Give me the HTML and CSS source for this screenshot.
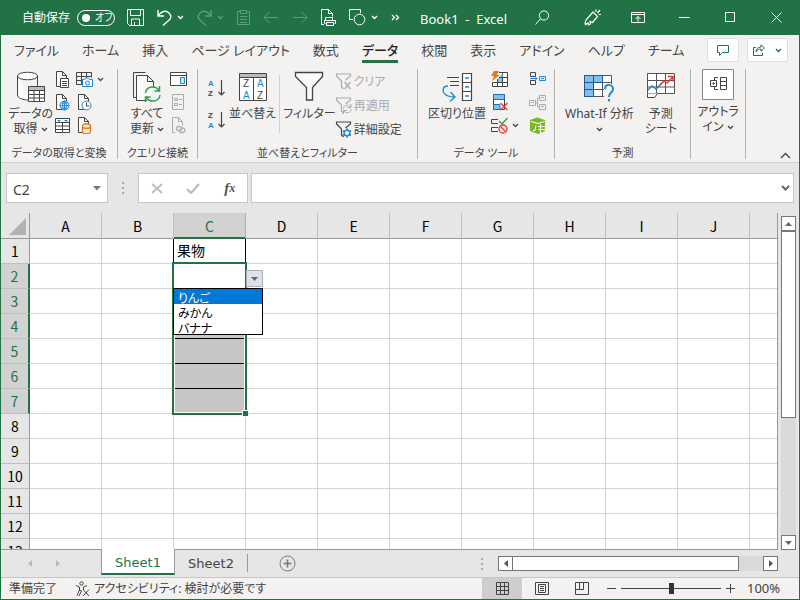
FILE: index.html
```html
<!DOCTYPE html>
<html lang="ja">
<head>
    <meta charset="UTF-8">
    <meta name="viewport" content="width=device-width, initial-scale=1.0">
    <title>Book1 - Excel</title>
    <link rel="stylesheet" href="styles.css">
</head>
<body>

<svg class="defs" aria-hidden="true">
    <symbol id="chevron" viewBox="0 0 7 5"><path d="M1 1l2.5 2.5L6 1" fill="none" stroke="currentColor" stroke-width="1.3"/></symbol>
    <symbol id="page" viewBox="0 0 17 17"><path d="M8.5 15.5h-6v-15h6l4 4v3M8.5.5v4h4" fill="#fafafa" stroke="#444"/></symbol>
    <symbol id="small-funnel" viewBox="0 0 17 17"><path d="M6.500 8L1.500 3V1h14v2l-5 4M6.500 8v6l2 2" fill="none" stroke="currentColor" stroke-width="1.2"/></symbol>
</svg>

<div class="window">
    <header class="titlebar">
        <label class="autosave">自動保存
            <input type="checkbox" role="switch">
            <span class="switch">オフ</span>
        </label>
        <div class="quick">
            <button class="tool" aria-label="保存"><svg width="17" height="17" viewBox="0 0 17 17"><path d="M.5.500h16v16h-14l-2-2zM3.500.5v6h10v-6M4.500 16v-6h8v6M7.500 16v-3" /></svg></button>
            <button class="tool" aria-label="元に戻す"><svg width="15" height="17" viewBox="0 0 15 17"><path d="M1 1v6h6M1 7c3-5 8-6 11-3s2 6-1 8l-5 4.500" stroke-width="1.400"/></svg></button>
            <button class="tool more" aria-label="元に戻す一覧"><svg class="chevron"><use href="#chevron"/></svg></button>
            <button class="tool off redo" aria-label="やり直し"><svg width="15" height="17" viewBox="0 0 15 17"><path d="M14 1v6H8M14 7C11 2 6 1 3 4s-2 6 1 8l5 4.500" stroke-width="1.400"/></svg></button>
            <button class="tool more off" aria-label="やり直し一覧"><svg class="chevron"><use href="#chevron"/></svg></button>
            <button class="tool off" aria-label="貼り付け"><svg width="13" height="17" viewBox="0 0 13 17"><path d="M3.500 2.500h-3v13h12v-13h-3M3.500 1.500h6v3h-6zM3 7.500h7M3 10.500h7M3 13.500h7"/></svg></button>
            <button class="tool off" aria-label="戻る"><svg width="16" height="13" viewBox="0 0 16 13"><path d="M15 6.500H1M6.500 1L1 6.500 6.500 12"/></svg></button>
            <button class="tool off" aria-label="進む"><svg width="16" height="13" viewBox="0 0 16 13"><path d="M1 6.500h14M9.500 1L15 6.500 9.500 12"/></svg></button>
            <button class="tool" aria-label="印刷プレビュー"><svg width="15" height="17" viewBox="0 0 15 17"><path d="M3 15.500H.5V.5h7l4 4v3M7.500.5v4h4M4.500 11.500v-3h7v3M4.500 14.500h-1v-3h11v3h-1M5.500 13.500h7v3h-7z"/></svg></button>
            <button class="tool" aria-label="図形"><svg width="17" height="17" viewBox="0 0 17 17"><path d="M4 10.500H.5V.5h11V4"/><circle cx="10.500" cy="10.500" r="5.300"/></svg></button>
            <button class="tool more" aria-label="図形一覧"><svg class="chevron"><use href="#chevron"/></svg></button>
            <button class="tool" aria-label="その他"><svg width="9" height="7" viewBox="0 0 9 7"><path d="M1 1l2.500 2.500L1 6M5 1l2.500 2.500L5 6" stroke-width="1.300"/></svg></button>
        </div>
        <h1 class="title">Book1&nbsp; -&nbsp; Excel</h1>
        <div class="controls">
            <button aria-label="検索"><svg width="15" height="15" viewBox="0 0 15 15"><circle cx="9" cy="5.500" r="4.600"/><path d="M5.500 8.800L.5 14.500"/></svg></button>
            <button aria-label="描画"><svg width="17" height="17" viewBox="0 0 17 17"><path d="M9 3l4.500 4.500-5 6-2.500-1 .5 2.500-2 1-.5-2-2.500 1.500L1 14l1-3zM12 3V.5M13.500 4L16 1M14.500 5.500h2.500" stroke-width="1.200"/></svg></button>
            <button aria-label="リボンの表示"><svg width="14" height="11" viewBox="0 0 14 11"><path d="M.5.500h13v10H.5zM.5 2.500h13M7 9.500v-5M4.500 7L7 4.500 9.500 7"/></svg></button>
            <button aria-label="最小化"><svg width="11" height="11" viewBox="0 0 11 11"><path d="M0 5.500h10.500"/></svg></button>
            <button aria-label="最大化"><svg width="11" height="11" viewBox="0 0 11 11"><path d="M.5.500h9v9h-9z"/></svg></button>
            <button aria-label="閉じる"><svg width="11" height="11" viewBox="0 0 11 11"><path d="M.5.500l10 10M10.500.5l-10 10"/></svg></button>
        </div>
    </header>

    <nav class="tabs">
        <a href="#">ファイル</a>
        <a href="#">ホーム</a>
        <a href="#">挿入</a>
        <a href="#">ページ レイアウト</a>
        <a href="#">数式</a>
        <a href="#" class="active">データ</a>
        <a href="#">校閲</a>
        <a href="#">表示</a>
        <a href="#">アドイン</a>
        <a href="#">ヘルプ</a>
        <a href="#">チーム</a>
        <div class="share">
            <button aria-label="コメント"><svg width="12" height="11" viewBox="0 0 12 11"><path d="M.5.500h11v7h-6l-3 3v-3h-2z"/></svg></button>
            <button aria-label="共有"><svg width="12" height="12" viewBox="0 0 12 12"><path d="M3 3.500H.5v8h9V9M3 8c0-3 2-5 5-5V.800L11.500 4 8 7.200V5C6 5 4 6 3 8z"/></svg><svg class="chevron"><use href="#chevron"/></svg></button>
        </div>
    </nav>

    <section class="ribbon">
        <div class="group get-data">
            <div class="tools">
                <button class="big"><svg width="30" height="32" viewBox="0 0 30 32"><path d="M1.500 5v19c0 3 5 5 11 5h2M1.500 5c0-5 20-5 20 0s-20 5-20 0M21.500 5v10" fill="#fafafa" stroke="#444"/><path d="M12.500 15.500h16v15h-16z" fill="#fff" stroke="#444"/><path d="M13 16h15v3H13z" fill="#bbb"/><path d="M12.500 19.500h16M12.500 23.500h16M12.500 27h16M18 19.500v11M23.500 19.500v11" stroke="#444"/></svg>データの<br>取得 <svg class="chevron"><use href="#chevron"/></svg></button>
                <div class="stack">
                    <button aria-label="テキストから"><svg width="17" height="17"><use href="#page"/><path d="M6.500 7.500h8v9h-8z" fill="#fff" stroke="#444"/><path d="M8 10.500h5M8 12.500h5M8 14.500h5" stroke="#444"/></svg></button>
                    <button aria-label="Web から"><svg width="17" height="17"><use href="#page"/><circle cx="10.500" cy="11.500" r="4.500" fill="#fff" stroke="#1e88d2"/><path d="M6 11.500h9M10.500 7v9M7 9h7M7 14h7" stroke="#1e88d2"/><ellipse cx="10.500" cy="11.500" rx="2" ry="4.500" fill="none" stroke="#1e88d2"/></svg></button>
                    <button aria-label="テーブルから"><svg width="17" height="17"><path d="M1.500 1.500h14v14h-14zM1.500 5.500h14M1.500 9h14M1.500 12.500h14M8.500 5.500v10" fill="#fff" stroke="#444"/><path d="M3 3h4L5 5zM10 3h4l-2 2z" fill="#1e88d2"/></svg></button>
                </div>
                <div class="stack">
                    <span class="pair"><button aria-label="画像から"><svg width="17" height="17"><path d="M.5 1.500h15v5M.5 1.500v12h5M.5 5.500h15M.5 9.500h6M5.500 1.500v12M10.500 1.500v5" fill="none" stroke="#444"/><path d="M6.500 8.500h2l1-1.500h3l1 1.500h3v7h-10z" fill="#fff" stroke="#1e88d2"/><circle cx="11.500" cy="12" r="2" fill="none" stroke="#1e88d2"/></svg></button><button class="arrow" aria-label="画像のオプション"><svg class="chevron"><use href="#chevron"/></svg></button></span>
                    <button aria-label="最近使ったソース"><svg width="17" height="17"><use href="#page"/><circle cx="10.500" cy="11.500" r="4.500" fill="#fff" stroke="#1e88d2"/><path d="M10.500 8.500v3.500h3" fill="none" stroke="#444"/></svg></button>
                    <button aria-label="既存の接続"><svg width="17" height="17"><use href="#page"/><path d="M6.500 9v5.500c0 3 8 3 8 0V9c0-3-8-3-8 0s8 3 8 0" fill="#fce9d4" stroke="#e07b16" stroke-width="1.300"/></svg></button>
                </div>
            </div>
            <h2>データの取得と変換</h2>
        </div>

        <div class="group queries">
            <div class="tools">
                <button class="big"><svg width="30" height="32" viewBox="0 0 30 32"><path d="M4 26.500H1.500v-25h12" fill="none" stroke="#444"/><path d="M15 29.500H4.500v-25h11l6 6v6M15.500 4.500v6h6" fill="#fafafa" stroke="#444"/><path d="M13.500 22c1-7 10-8 13.500-2.500M27.500 15v5h-5M28 24c-1 7-10 8-13.500 2.500M13.500 31v-5h5" fill="none" stroke="#2ea04e" stroke-width="1.500"/></svg>すべて<br>更新 <svg class="chevron"><use href="#chevron"/></svg></button>
                <div class="stack">
                    <button aria-label="クエリと接続"><svg width="17" height="17"><path d="M.5 1.500h16v13H.5zM.5 4.500h16" fill="#fff" stroke="#444"/><path d="M10.500 6.500h4v6h-4z" fill="#cfe5f6" stroke="#1e88d2"/></svg></button>
                    <button aria-label="プロパティ" disabled><svg width="17" height="17"><path d="M2.500.5h11v15h-11zM4.500 4.500h3v2h-3zM4.500 9.500h3v2h-3zM9 5.500h3M9 10.500h3" fill="none" stroke="#aaa"/></svg></button>
                    <button aria-label="リンクの編集" disabled><svg width="17" height="17"><path d="M5 15.500H2.500V.5h6l4 4v4M8.500.5v4h4" fill="none" stroke="#aaa"/><path d="M9 13.500H7.500c-2-1-1-4 1-4h2c2 1 1 4 0 4M11 11h2c3 1 2 4 0 4.500h-2.500c-2-1-1-3 0-3.500" fill="none" stroke="#aaa" stroke-width="1.300"/></svg></button>
                </div>
            </div>
            <h2>クエリと接続</h2>
        </div>

        <div class="group sorting">
            <div class="tools">
                <div class="orders">
                    <button aria-label="昇順"><svg width="18" height="20" viewBox="0 0 18 20"><text x="0" y="8" class="letter blue">A</text><text x="0" y="18" class="letter">Z</text><path d="M13.500 2v15M10.500 14l3 3 3-3" fill="none" stroke="#444" stroke-width="1.200"/></svg></button>
                    <button aria-label="降順"><svg width="18" height="20" viewBox="0 0 18 20"><text x="0" y="8" class="letter">Z</text><text x="0" y="18" class="letter blue">A</text><path d="M13.500 2v15M10.500 14l3 3 3-3" fill="none" stroke="#444" stroke-width="1.200"/></svg></button>
                </div>
                <button class="big"><svg width="30" height="32" viewBox="0 0 30 32"><path d="M1.500 2.500h27v27h-27z" fill="#fff" stroke="#444"/><path d="M2 3h26v3H2z" fill="#bbb"/><path d="M1.500 6.500h27M15.500 6.500v23" stroke="#444"/><text x="5" y="16" class="glyph">Z</text><text x="5" y="28" class="glyph blue">A</text><text x="19" y="16" class="glyph blue">A</text><text x="19" y="28" class="glyph">Z</text></svg>並べ替え</button>
                <div class="rule"></div>
                <button class="big"><svg width="30" height="32" viewBox="0 0 30 32"><path d="M1.500 1.500h27v4l-10 11v12.500h-6V16.500l-11-11z" fill="#fafafa" stroke="#444" stroke-width="1.300"/></svg>フィルター</button>
                <div class="stack wide">
                    <button disabled><svg width="17" height="17"><use href="#small-funnel"/><path d="M9.500 9l6 7M15.500 9l-6 7" stroke="#aaa" stroke-width="1.200"/></svg>クリア</button>
                    <button disabled><svg width="17" height="17"><use href="#small-funnel"/><path d="M8.500 12c0-4 5-5 7-2M16 7v3.500h-3.500M16 12c0 4-5 5-7 2M8.500 17v-3.500H12" fill="none" stroke="#aaa"/></svg>再適用</button>
                    <button><svg width="17" height="17"><use href="#small-funnel"/><circle cx="12" cy="12" r="2.800" fill="#fff" stroke="#1e88d2" stroke-width="1.500"/><path d="M12 7.500v2M12 14.500v2M8 9.800l1.800 1M14.200 13.200l1.800 1M8 14.200l1.800-1M14.200 10.800l1.800-1" stroke="#1e88d2" stroke-width="1.800"/></svg>詳細設定</button>
                </div>
            </div>
            <h2>並べ替えとフィルター</h2>
        </div>

        <div class="group data-tools">
            <div class="tools">
                <button class="big"><svg width="32" height="32" viewBox="0 0 32 32"><path d="M21.500 2.500h9v27h-9zM21.500 11.500h9M21.500 20.500h9" fill="#fff" stroke="#444" stroke-width="1.200"/><path d="M6 6.500h12M9 10.500h9M9 14.500h9" stroke="#444" stroke-width="1.200"/><path d="M24 7h4M24 16h4M24 25h4M7 15C2 15 1 19 3 22c2 3 6 4 11 4M9.500 21l4.500 5-5 4.500" fill="none" stroke="#1e88d2" stroke-width="1.300"/></svg>区切り位置</button>
                <div class="stack">
                    <button aria-label="フラッシュ フィル"><svg width="17" height="17"><path d="M8 1.500h8.500v14h-15v-4M1.500 11.500h15M6.500 8v7M11.500 1.500v14M8 6.500h8" fill="#fff" stroke="#444"/><path d="M7 7h4v4H7zM11.500 2v4L8 6z" fill="#8cc4ee"/><path d="M3 0h5L6 4h3L1 10l2-5H0z" fill="#e07b16"/></svg></button>
                    <button aria-label="重複の削除"><svg width="17" height="17"><path d="M2.500.5h11v15h-11z" fill="#fff" stroke="#444"/><path d="M2.500.5h11v5h-11zM2.500 10.500H9v5H2.500z" fill="#85bdeb" stroke="#1e70b8"/><path d="M9.500 9l7 7M16.500 9l-7 7" stroke="#e33" stroke-width="1.300"/></svg></button>
                    <span class="pair"><button aria-label="データの入力規則"><svg width="17" height="17"><path d="M7 2.500H.5v4H7M7 10.500H.5v4H7" fill="none" stroke="#444"/><path d="M8 4l3 3 5.500-6" fill="none" stroke="#2ea04e" stroke-width="1.300"/><circle cx="12" cy="12" r="4" fill="none" stroke="#e33" stroke-width="1.300"/><path d="M9.500 9.500l5 5" stroke="#e33" stroke-width="1.300"/></svg></button><button class="arrow" aria-label="入力規則のオプション"><svg class="chevron"><use href="#chevron"/></svg></button></span>
                </div>
                <div class="stack">
                    <button aria-label="統合"><svg width="17" height="17"><path d="M1.500 1.500h5v4h-5zM1.500 9.500h5v4h-5z" fill="none" stroke="#444"/><path d="M1 7.500h7M6 5.500l2 2-2 2M10.500 5.500h6v4h-6zM12 7.500h3" fill="none" stroke="#1e88d2"/></svg></button>
                    <button aria-label="リレーションシップ" disabled><svg width="17" height="17"><path d="M.5 6.500h6v5h-6zM2 8.500h3M10.500 1.500h6v5h-6zM12 3.500h3M10.500 10.500h6v5h-6zM12 12.500h3M6.500 9H9M8.500 4v9M8.500 4h2M8.500 13h2" fill="none" stroke="#aaa"/></svg></button>
                    <button aria-label="データ モデル"><svg width="17" height="17"><path d="M1 3l7-2.500L16 3v11l-7 3-8-3z" fill="#7ab829"/><path d="M2 4.500l7 2 6.500-2M11.500 7v9M9 9.500h7M9 12.500h7M4 13.500h2l1-5" fill="none" stroke="#fff"/></svg></button>
                </div>
            </div>
            <h2>データ ツール</h2>
        </div>

        <div class="group forecast">
            <div class="tools">
                <button class="big"><svg width="32" height="32" viewBox="0 0 32 32"><path d="M1.500 4.500h27v21h-27zM1.500 11.500h27M1.500 18.500h27M10.500 4.500v21M19.500 4.500v21" fill="#fff" stroke="#555"/><path d="M1.500 4.500h9v21h-9zM1.500 11.500h9M1.500 18.500h9M10.500 4.500h9v7h-9z" fill="#85bdeb" stroke="#1e5a91"/><path d="M21 13h10v17H21z" fill="#f3f2f1"/><path d="M22 18c0-6 8-5 8 0 0 4-4 3-4 8M26 28v2.500" fill="none" stroke="#1e88d2" stroke-width="2"/></svg>What-If 分析<br><svg class="chevron"><use href="#chevron"/></svg></button>
                <button class="big"><svg width="30" height="32" viewBox="0 0 30 32"><path d="M11 22.500H1.500v-20h27v20zM1.500 9.500h27M1.500 16h27M10.500 2.500v20M19.500 2.500v20" fill="#fff" stroke="#555"/><path d="M1.500 22.500v4h7l3-4" fill="#fff" stroke="#444"/><path d="M2 19l4-4 4 3 6-6" fill="none" stroke="#1e88d2" stroke-width="1.500"/><path d="M14 14l4-4 3 2 6-6M22 5.500h5v5" fill="none" stroke="#e33" stroke-width="1.500"/></svg>予測<br>シート</button>
            </div>
            <h2>予測</h2>
        </div>

        <div class="group outline">
            <div class="tools">
                <button class="big"><svg width="32" height="32" viewBox="0 0 32 32"><path d="M.5.500h31v30H.5z" fill="#fff" stroke="#888"/><path d="M18.500 8.500h6v12h-6zM18.500 12.500h6M18.500 16.500h6M8.500 11.500h6v6h-6zM12.500 11V8.500H16M12.500 18v2.500H16" fill="none" stroke="#444"/><path d="M10 14.500h3M11.500 13v3" stroke="#1e88d2"/></svg>アウトラ<br>イン <svg class="chevron"><use href="#chevron"/></svg></button>
            </div>
        </div>
        <button class="collapse" aria-label="リボンを折りたたむ"><svg width="11" height="7" viewBox="0 0 11 7"><path d="M1 6l4.500-4.500L10 6" fill="none" stroke="#444" stroke-width="1.300"/></svg></button>
    </section>

    <section class="formula-bar">
        <div class="name-box">
            <input type="text" value="C2" aria-label="名前ボックス">
            <svg width="8" height="5"><path d="M0 0h8L4 4.500z" fill="#777"/></svg>
        </div>
        <span class="dots"></span>
        <div class="entry">
            <button aria-label="キャンセル"><svg width="12" height="11"><path d="M1 1l10 9M11 1L1 10" stroke="#bbb" stroke-width="1.800"/></svg></button>
            <button aria-label="入力"><svg width="14" height="11"><path d="M1 6l4 4 8-9" fill="none" stroke="#bbb" stroke-width="2.200"/></svg></button>
            <button class="fx" aria-label="関数の挿入">f<small>x</small></button>
        </div>
        <div class="formula">
            <input type="text" aria-label="数式">
            <svg width="9" height="6"><path d="M1 1l3.500 3.500L8 1" fill="none" stroke="#666" stroke-width="2"/></svg>
        </div>
    </section>

    <main class="workarea">
        <div class="sheet">
            <table>
                <thead>
                    <tr><th class="corner" aria-label="すべて選択"><svg width="17" height="17"><path d="M17 0v17H0z" fill="#b2b2b2"/></svg></th><th>A</th><th>B</th><th class="selected">C</th><th>D</th><th>E</th><th>F</th><th>G</th><th>H</th><th>I</th><th>J</th><th></th></tr>
                </thead>
                <tbody>
                    <tr><th>1</th><td></td><td></td><td class="boxed">果物</td><td></td><td></td><td></td><td></td><td></td><td></td><td></td><td></td></tr>
                    <tr><th class="selected">2</th><td></td><td></td>
                        <td class="current">
                            <div class="range"><i></i><i></i><i></i><i></i><i></i><i></i><b class="handle"></b></div>
                            <button class="drop" aria-label="リストを開く"><svg width="7" height="4"><path d="M0 0h7L3.500 4z" fill="#666"/></svg></button>
                            <select class="list" size="3" aria-label="果物">
                                <option selected>りんご</option>
                                <option>みかん</option>
                                <option>バナナ</option>
                            </select>
                        </td>
                        <td></td><td></td><td></td><td></td><td></td><td></td><td></td><td></td></tr>
                    <tr><th class="selected">3</th><td></td><td></td><td></td><td></td><td></td><td></td><td></td><td></td><td></td><td></td><td></td></tr>
                    <tr><th class="selected">4</th><td></td><td></td><td></td><td></td><td></td><td></td><td></td><td></td><td></td><td></td><td></td></tr>
                    <tr><th class="selected">5</th><td></td><td></td><td></td><td></td><td></td><td></td><td></td><td></td><td></td><td></td><td></td></tr>
                    <tr><th class="selected">6</th><td></td><td></td><td></td><td></td><td></td><td></td><td></td><td></td><td></td><td></td><td></td></tr>
                    <tr><th class="selected">7</th><td></td><td></td><td></td><td></td><td></td><td></td><td></td><td></td><td></td><td></td><td></td></tr>
                    <tr><th>8</th><td></td><td></td><td></td><td></td><td></td><td></td><td></td><td></td><td></td><td></td><td></td></tr>
                    <tr><th>9</th><td></td><td></td><td></td><td></td><td></td><td></td><td></td><td></td><td></td><td></td><td></td></tr>
                    <tr><th>10</th><td></td><td></td><td></td><td></td><td></td><td></td><td></td><td></td><td></td><td></td><td></td></tr>
                    <tr><th>11</th><td></td><td></td><td></td><td></td><td></td><td></td><td></td><td></td><td></td><td></td><td></td></tr>
                    <tr><th>12</th><td></td><td></td><td></td><td></td><td></td><td></td><td></td><td></td><td></td><td></td><td></td></tr>
                    <tr><th>13</th><td></td><td></td><td></td><td></td><td></td><td></td><td></td><td></td><td></td><td></td><td></td></tr>
                </tbody>
            </table>
        </div>
        <div class="scroll vertical">
            <button aria-label="上へ"><svg width="7" height="4"><path d="M0 4h7L3.500 0z" fill="#666"/></svg></button>
            <div class="thumb"></div>
            <button class="end" aria-label="下へ"><svg width="7" height="4"><path d="M0 0h7L3.500 4z" fill="#666"/></svg></button>
        </div>
    </main>

    <footer>
        <div class="sheetbar">
            <div class="nav">
                <button aria-label="前のシート"><svg width="4" height="7"><path d="M4 0v7L0 3.500z" fill="#bbb"/></svg></button>
                <button aria-label="次のシート"><svg width="4" height="7"><path d="M0 0v7l4-3.500z" fill="#bbb"/></svg></button>
            </div>
            <button class="sheet-tab active">Sheet1</button>
            <button class="sheet-tab">Sheet2</button>
            <button class="add" aria-label="新しいシート"><svg width="17" height="17"><circle cx="8.500" cy="8.500" r="7.500" fill="none" stroke="#777"/><path d="M8.500 4.500v8M4.500 8.500h8" stroke="#777" stroke-width="1.600"/></svg></button>
            <span class="dots"></span>
            <div class="scroll horizontal">
                <button aria-label="左へ"><svg width="4" height="7"><path d="M4 0v7L0 3.500z" fill="#555"/></svg></button>
                <div class="thumb"></div>
                <button class="end" aria-label="右へ"><svg width="4" height="7"><path d="M0 0v7l4-3.500z" fill="#555"/></svg></button>
            </div>
        </div>
        <div class="status">
            <span>準備完了</span>
            <button class="access"><svg width="16" height="16" viewBox="0 0 16 16"><circle cx="6.500" cy="2.500" r="1.700"/><path d="M1 4.500l3.500 1.500v3L2 14.500M12 4.500L8.500 6v3M4.500 9l2 1L4 15M8 8.500l6 6.500M14 8.500L8 15"/></svg>アクセシビリティ: 検討が必要です</button>
            <div class="views">
                <button class="active" aria-label="標準"><svg width="13" height="13"><path d="M.5.500h12v12H.5zM.5 4.500h12M.5 8.500h12M4.500.5v12M8.500.5v12"/></svg></button>
                <button aria-label="ページ レイアウト"><svg width="14" height="13"><path d="M.5.500h13v12H.5zM3.500 2.500h7v8h-7zM5 4.500h4M5 6.500h4M5 8.500h4"/></svg></button>
                <button aria-label="改ページ プレビュー"><svg width="14" height="13"><path d="M.5.500h13v12H.5zM.5 7.500h8v-7M4.500.5v7"/></svg></button>
            </div>
            <button class="step" aria-label="縮小"><svg width="9" height="9"><path d="M0 4.500h9"/></svg></button>
            <input class="zoom" type="range" min="0" max="100" value="50" aria-label="ズーム">
            <button class="step" aria-label="拡大"><svg width="9" height="9"><path d="M0 4.500h9M4.500 0v9"/></svg></button>
            <output>100%</output>
        </div>
    </footer>
</div>

</body>
</html>
```
FILE: styles.css
```css
* {
    box-sizing: border-box;
}

body {
    margin: 0;
    font-family: "Noto Sans", "Noto Sans CJK JP", sans-serif;
    font-feature-settings: "palt";
    font-size: 12px;
    line-height: 15px;
    color: #444;
}

button,
input,
select {
    font: inherit;
    font-feature-settings: inherit;
    color: inherit;
}

button {
    display: flex;
    align-items: center;
    justify-content: center;
    padding: 0;
    border: 0;
    background: none;
}

svg {
    flex: none;
}

h1,
h2 {
    margin: 0;
    font-size: inherit;
    font-weight: normal;
}

.defs {
    display: none;
}

.chevron {
    width: 7px;
    height: 5px;
}

.window {
    display: flex;
    flex-direction: column;
    height: 100vh;
    border: 1px solid #217346;
    border-top: 0;
    background: #e6e6e6;
    overflow: hidden;
}

/* Title bar */
.titlebar {
    display: flex;
    align-items: center;
    flex: none;
    height: 35px;
    padding-left: 21px;
    background: #217346;
    color: #fff;
}

.titlebar svg {
    fill: none;
    stroke: currentColor;
}

.titlebar .chevron {
    stroke: none;
}

.autosave {
    display: flex;
    align-items: center;
    gap: 7px;
}

.autosave input {
    position: absolute;
    opacity: 0;
}

.switch {
    display: flex;
    align-items: center;
    gap: 5px;
    width: 38px;
    height: 16px;
    padding-left: 4px;
    border: 1px solid #fff;
    border-radius: 8px;
    font-size: 10px;
}

.switch::before {
    content: "";
    width: 8px;
    height: 8px;
    border-radius: 50%;
    background: #fff;
}

.quick {
    display: flex;
    align-items: center;
    gap: 13px;
    margin-left: 12px;
}

.quick .off {
    color: #5f9c7b;
}

.quick .more {
    margin-left: -8px;
}

.title {
    margin-left: 20px;
    padding-top: 3px;
    font-size: 13px;
    white-space: nowrap;
}

.controls {
    display: flex;
    margin-left: auto;
}

.controls button {
    width: 46px;
    height: 35px;
}

.controls button:first-child {
    width: 54px;
}

/* Ribbon tabs */
.tabs {
    display: flex;
    flex: none;
    gap: 23px;
    height: 31px;
    padding: 0 12px 0 13px;
    background: #f3f2f1;
}

.tabs a {
    padding-top: 8px;
    font-size: 13px;
    color: inherit;
    text-decoration: none;
    white-space: nowrap;
}

.tabs .active {
    height: 28px;
    border-bottom: 3px solid #217346;
    font-weight: 500;
    color: #222;
}

.share {
    display: flex;
    gap: 8px;
    margin-left: auto;
    padding-top: 3px;
}

.share button {
    gap: 10px;
    width: 32px;
    height: 24px;
    border: 1px solid #e1dfdd;
    border-radius: 2px;
    background: #fff;
    color: #217346;
}

.share button + button {
    width: 41px;
}

.share svg {
    fill: none;
    stroke: currentColor;
}

.share .chevron {
    stroke: none;
}

/* Ribbon */
.ribbon {
    display: flex;
    flex: none;
    height: 97px;
    padding-top: 3px;
    border-bottom: 1px solid #d2d0ce;
    background: #f3f2f1;
    white-space: nowrap;
}

.group {
    display: flex;
    flex-direction: column;
    justify-content: space-between;
    flex: none;
    height: 90px;
    padding: 0 7px;
    border-right: 1px solid #b4b2b0;
}

.group h2 {
    margin: 0 -7px;
    font-size: 11px;
    line-height: 12px;
    text-align: center;
}

.get-data {
    width: 117px;
}

.queries {
    width: 80px;
}

.sorting {
    width: 220px;
}

.data-tools {
    width: 137px;
}

.forecast {
    width: 136px;
}

.outline {
    width: 55px;
    padding: 0 5px;
}

.tools {
    display: flex;
    align-items: flex-start;
    gap: 5px;
}

.big {
    display: block;
    flex: none;
    min-width: 44px;
    text-align: center;
}

.big > svg:first-child {
    display: block;
    margin: 2px auto 3px;
}

.big .chevron {
    vertical-align: middle;
}

.outline .big > svg:first-child {
    margin-top: 0;
}

.stack {
    display: flex;
    flex-direction: column;
    align-items: flex-start;
    gap: 6px;
    padding-top: 2px;
}

.big + .stack {
    margin-left: -4px;
}

.stack.wide {
    gap: 7px;
    padding-top: 4px;
}

.stack.wide button {
    gap: 2px;
    height: 17px;
}

.stack button:disabled {
    color: #aaa;
}

.pair {
    display: flex;
    margin-right: -14px;
}

.pair .arrow {
    width: 14px;
}

.sorting .tools {
    gap: 3px;
    padding-left: 3px;
}

.orders {
    display: flex;
    flex-direction: column;
    gap: 12px;
    padding-top: 9px;
}

.rule {
    width: 1px;
    height: 58px;
    margin-top: 6px;
    background: #d2d0ce;
}

.letter {
    font: bold 8px "Liberation Sans", sans-serif;
    fill: #444;
}

.glyph {
    font: 10px "Liberation Sans", sans-serif;
    fill: #444;
}

.letter.blue,
.glyph.blue {
    fill: #1e88d2;
}

.data-tools .tools {
    padding-left: 3px;
}

.data-tools .big + .stack {
    margin-left: 0;
}

.data-tools .stack + .stack {
    margin-left: 16px;
}

.forecast .tools {
    padding-left: 3px;
}

.collapse {
    align-self: flex-end;
    margin: 0 8px 3px auto;
}

/* Formula bar */
.formula-bar {
    display: flex;
    flex: none;
    gap: 3px;
    height: 50px;
    padding: 10px 5px;
}

.name-box,
.entry,
.formula {
    display: flex;
    align-items: center;
    border: 1px solid #c6c6c6;
    background: #fff;
}

.name-box {
    width: 102px;
    padding: 0 6px;
}

.name-box input,
.formula input {
    flex: 1;
    min-width: 0;
    padding: 2px 0 0;
    border: 0;
    background: none;
    font-size: 14px;
}

.dots {
    align-self: center;
    width: 2px;
    height: 12px;
    background: repeating-linear-gradient(#aaa 0 2px, transparent 2px 5px);
}

.formula-bar .dots {
    margin: 0 11px;
}

.entry {
    justify-content: space-around;
    width: 110px;
}

.fx {
    font: italic bold 15px "Liberation Serif", serif;
    color: #555;
}

.fx small {
    font-size: 12px;
}

.formula {
    flex: 1;
    padding: 0 3px;
}

/* Cells */
.workarea {
    display: flex;
    flex: 1;
    min-height: 0;
}

.sheet {
    flex: 1;
    min-width: 0;
    overflow: hidden;
    border-right: 1px solid #999;
    border-bottom: 1px solid #999;
}

.sheet table {
    width: 821px;
    table-layout: fixed;
    border-spacing: 0;
    background: #fff;
    font-family: "Noto Sans CJK JP", sans-serif;
    font-size: 14px;
    color: #000;
}

.sheet th,
.sheet td {
    width: 72px;
    height: 25px;
    padding: 0;
    border-right: 1px solid #d4d4d4;
    border-bottom: 1px solid #d4d4d4;
    font-weight: normal;
    line-height: 20px;
}

.sheet td {
    padding-bottom: 2px;
}

.sheet th {
    border-color: #bfbfbf;
    background: #e6e6e6;
}

.sheet thead th {
    height: 26px;
    border-bottom-color: #999;
}

.sheet th:first-child {
    width: 29px;
    border-right-color: #999;
}

.sheet .corner {
    padding: 4px 3px 3px;
    line-height: 0;
    text-align: right;
}

.sheet th.selected {
    border-right-color: #b0b0b0;
    background: #d2d2d2;
    color: #217346;
}

.sheet thead th.selected {
    padding-top: 1px;
    border-bottom: 2px solid #217346;
}

.sheet tbody th.selected {
    border-right: 2px solid #217346;
}

.sheet .boxed {
    padding-left: 3px;
    border-right-color: #000;
    box-shadow: -1px 0 #000;
}

.current {
    position: relative;
}

.range {
    position: absolute;
    top: -2px;
    left: -2px;
    width: 75px;
    height: 153px;
    padding: 0 1px 1px;
    border: 2px solid #217346;
    background: #fff;
}

.range i {
    display: block;
    height: 25px;
    border-bottom: 1px solid #000;
    background: #c6c6c6;
}

.range i:first-child {
    background: #fff;
}

.range i:nth-child(6) {
    height: 23px;
    border: 0;
}

.handle {
    position: absolute;
    right: -4px;
    bottom: -4px;
    width: 7px;
    height: 7px;
    border: 1px solid #fff;
    background: #217346;
}

.drop {
    position: absolute;
    top: 6px;
    left: 72px;
    width: 17px;
    height: 17px;
    border: 1px solid #adb2ba;
    background: #dde0e6;
}

.list {
    position: absolute;
    z-index: 1;
    top: 24px;
    left: -1px;
    width: 90px;
    height: 47px;
    padding: 0;
    border: 1px solid #000;
    border-radius: 0;
    outline: 0;
    background: #fff;
    color: #000;
    font-size: 12px;
    overflow: hidden;
}

.list option {
    height: 15px;
    min-height: 15px;
    padding: 0 4px;
    line-height: 13px;
}

.list option:checked {
    background: #0078d7 linear-gradient(#0078d7, #0078d7);
    color: #fff;
}

/* Scroll bars */
.scroll {
    display: flex;
    background: #dadada;
}

.scroll button {
    flex: none;
    width: 15px;
    height: 15px;
    border: 1px solid #777;
    background: #fff;
}

.scroll .thumb {
    border: 1px solid #777;
    background: #fff;
}

.scroll .end {
    margin-left: auto;
}

.vertical {
    flex-direction: column;
    width: 15px;
    margin: 3px 3px 0;
}

.vertical .thumb {
    height: 56%;
}

.vertical .end {
    margin-top: auto;
}

/* Sheet tabs */
.sheetbar {
    display: flex;
    align-items: center;
    height: 28px;
    padding-right: 21px;
    border-bottom: 1px solid #c6c6c6;
    font-size: 13px;
}

.nav {
    display: flex;
    gap: 24px;
    width: 100px;
    padding-left: 27px;
}

.sheet-tab {
    width: 72px;
    font-family: "DejaVu Sans", sans-serif;
}

.sheet-tab.active {
    align-self: flex-start;
    width: 74px;
    height: 26px;
    margin-top: -1px;
    padding-top: 3px;
    border: 1px solid #999;
    border-top: 0;
    border-bottom: 2px solid #217346;
    background: #fff;
    color: #217346;
}

.add {
    align-self: stretch;
    flex: 1;
    justify-content: flex-start;
    padding-left: 32px;
    background: linear-gradient(#999, #999) 0 4px / 1px 18px no-repeat;
}

.sheetbar .dots {
    margin-right: 15px;
}

.horizontal {
    width: 36%;
}

.horizontal .thumb {
    width: 81%;
    margin-left: -1px;
}

/* Status bar */
.status {
    display: flex;
    align-items: center;
    height: 21px;
    padding: 0 19px 0 8px;
    background: #f3f2f1;
    white-space: nowrap;
}

.status svg {
    fill: none;
    stroke: #444;
}

.access {
    gap: 3px;
    margin-left: 18px;
}

.views {
    display: flex;
    align-self: stretch;
    margin: 0 5px 0 auto;
}

.views button {
    width: 40px;
}

.views .active {
    background: #d0cecc;
}

.zoom {
    width: 100px;
    height: 11px;
    margin: 0 5px;
    appearance: none;
    background: linear-gradient(#444, #444) center / 100% 1px no-repeat;
}

.zoom::-webkit-slider-thumb {
    appearance: none;
    width: 5px;
    height: 11px;
    background: #333;
}

.status output {
    width: 33px;
    margin-left: 12px;
    font-size: 13px;
}
```
